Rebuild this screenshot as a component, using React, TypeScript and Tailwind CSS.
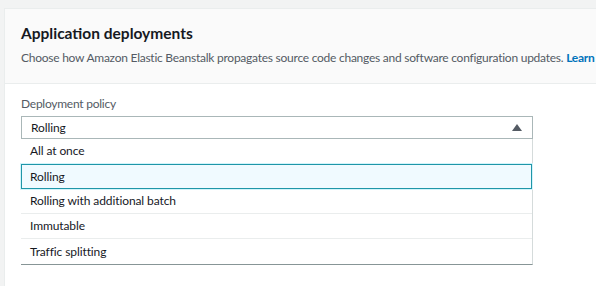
import { FC } from "react"

const options = [
  "All at once",
  "Rolling",
  "Rolling with additional batch",
  "Immutable",
  "Traffic splitting",
]

const Option: FC<{ label: string; selected: boolean; last: boolean }> = ({ label, selected, last }) => {
  if (selected) {
    return (
      <div className="h-[25px] flex items-center pl-[8px] border border-[#1f96a8] bg-[#f0faff] text-[12px] tracking-[-0.1px] text-[#16191f] shadow-[0_0_0_1px_#d2f4fb]">
        {label}
      </div>
    )
  }
  return (
    <div
      className={`h-[25px] flex items-center pl-[9px] text-[12px] tracking-[-0.1px] text-[#16191f] ${
        last ? "" : "border-b border-[#eaeded]"
      }`}
    >
      {label}
    </div>
  )
}

export default function App() {
  return (
    <div
      className="w-[596px] h-[286px] overflow-hidden bg-[#f2f3f3] pt-[8px] pl-[4px]"
      style={{ fontFamily: 'Lato, "Open Sans", Arial, sans-serif' }}
    >
      <div className="h-full bg-white border-l border-t border-[#eaeded]">
        <div className="h-[75px] bg-[#fafafa] border-b border-[#eaeded] px-[16px] pt-[12px]">
          <h2 className="text-[15.5px] font-bold text-[#16191f] leading-[24px]">Application deployments</h2>
          <p className="mt-[4px] text-[12px] tracking-[-0.25px] text-[#545b64] whitespace-nowrap leading-[18px]">
            Choose how Amazon Elastic Beanstalk propagates source code changes and software configuration updates.{" "}
            <span className="font-bold text-[#0073bb]">Learn more</span>
          </p>
        </div>

        <div className="px-[16px] pt-[11px]">
          <div className="text-[12px] tracking-[-0.25px] text-[#545b64] leading-[18px]">Deployment policy</div>
          <div className="w-[512px] mt-[3px]">
            <div className="h-[23px] flex items-center justify-between pl-[9px] pr-[10px] border border-[#aab7b8] bg-white text-[12px] tracking-[-0.1px] text-[#16191f]">
              <span>Rolling</span>
              <svg width="10" height="7" viewBox="0 0 10 7">
                <path d="M5 0 L10 7 L0 7 Z" fill="#545b64" />
              </svg>
            </div>
            <div className="bg-white border-r border-[#d5dbdb] border-b border-b-[#879596]">
              {options.map((o, i) => (
                <Option key={o} label={o} selected={o === "Rolling"} last={i === options.length - 1} />
              ))}
            </div>
          </div>
        </div>
      </div>
    </div>
  )
}
